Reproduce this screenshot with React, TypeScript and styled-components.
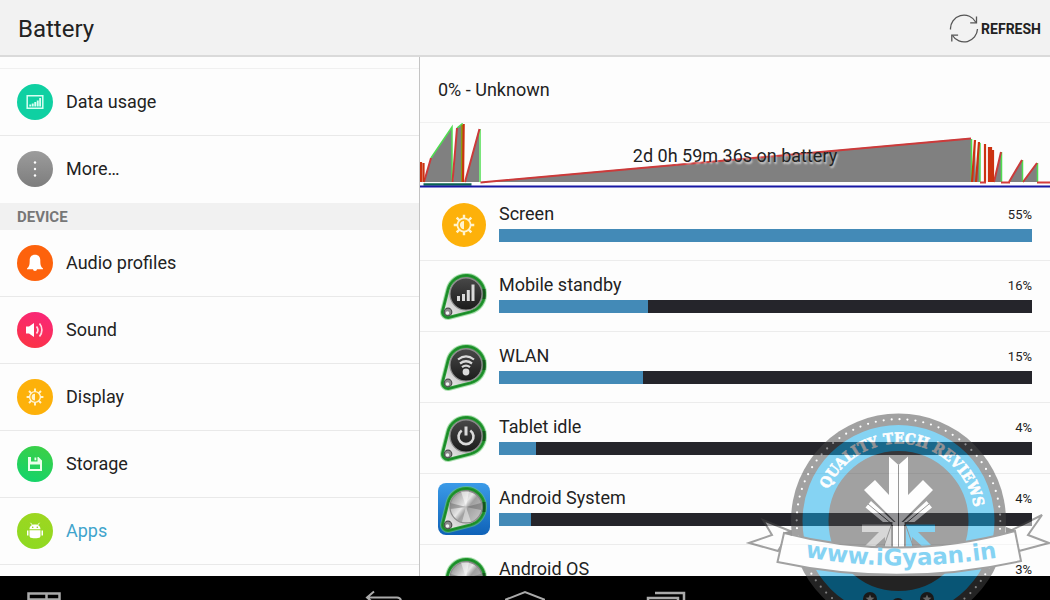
import React from "react";
import styled, { createGlobalStyle } from "styled-components";

const GlobalStyle = createGlobalStyle`
  *, *::before, *::after { box-sizing: border-box; }
  body {
    margin: 0;
    background: #fdfdfd;
    color: #222;
    font-family: Roboto, "Liberation Sans", sans-serif;
  }
  ul { list-style: none; margin: 0; padding: 0; }
`;

const Screen = styled.div`
  position: relative;
  display: flex;
  flex-direction: column;
  height: 100vh;
  overflow: hidden;
`;

const TopBar = styled.header`
  display: flex;
  flex: none;
  align-items: center;
  justify-content: space-between;
  height: 57px;
  padding: 2px 9px 0 18px;
  background: #f2f2f2;
  border-bottom: 2px solid #dadada;
`;

const Title = styled.h1`
  margin: 0;
  font-size: 24px;
  font-weight: 400;
  line-height: 32px;
`;

const RefreshButton = styled.button`
  display: flex;
  align-items: center;
  gap: 2px;
  padding: 0;
  border: 0;
  background: none;
  color: #222;
  font: 700 14px/20px Roboto, "Liberation Sans", sans-serif;
  cursor: pointer;
`;

const Panels = styled.div`
  display: flex;
  flex: 1;
  min-height: 0;
`;

const Sidebar = styled.nav`
  width: 40%;
  overflow: hidden;
  border-right: 1px solid #c4c4c4;
`;

const ScrolledRow = styled.div`
  height: 12px;
  border-bottom: 1px solid #f0f0f0;
`;

const SectionTitle = styled.h2`
  margin: 0;
  padding: 1px 17px 0;
  background: #f1f1f1;
  color: #777;
  font-size: 15px;
  font-weight: 700;
  line-height: 26px;
`;

const MenuItem = styled.li<{ $last?: boolean }>`
  border-bottom: 1px solid ${(p) => (p.$last ? "transparent" : "#e9e9e9")};
`;

const MenuLink = styled.a<{ $active?: boolean }>`
  display: flex;
  align-items: center;
  gap: 13px;
  height: 66px;
  padding: 0 17px;
  color: ${(p) => (p.$active ? "#3fa4cc" : "#222")};
  font-size: 18px;
  line-height: 24px;
  text-decoration: none;
`;

const Badge = styled.span<{ $fill: string; $size: number }>`
  display: grid;
  flex: none;
  place-items: center;
  width: ${(p) => p.$size}px;
  height: ${(p) => p.$size}px;
  border-radius: 50%;
  background: ${(p) => p.$fill};
`;

const Details = styled.main`
  flex: 1;
  min-width: 0;
  overflow: hidden;
`;

const Status = styled.p`
  margin: 0;
  padding: 0 18px;
  border-bottom: 1px solid #f0f0f0;
  font-size: 18px;
  line-height: 65px;
`;

const History = styled.div`
  position: relative;
  height: 67px;
  svg { display: block; width: 100%; height: 67px; }
`;

const HistoryCaption = styled.p`
  position: absolute;
  inset: 21px 0 auto;
  margin: 0;
  font-size: 18px;
  line-height: 24px;
  text-align: center;
  text-shadow: 1px 2px 2px #ffffffb0;
`;

const UsageRow = styled.li`
  display: flex;
  align-items: center;
  gap: 9px;
  height: 71px;
  padding: 0 18px;
  border-bottom: 1px solid #ececec;
`;

const IconSlot = styled.span`
  display: grid;
  flex: none;
  place-items: center;
  width: 52px;
  height: 52px;
`;

const UsageBody = styled.div`
  flex: 1;
  height: 61px;
`;

const UsageHead = styled.div`
  display: flex;
  align-items: center;
  justify-content: space-between;
  height: 34px;
  padding-top: 4px;
  font-size: 18px;
  line-height: 24px;
`;

const Percent = styled.span`
  padding-top: 3px;
  font-size: 13px;
  line-height: 20px;
`;

const Track = styled.div`
  height: 13px;
  background: #25252b;
`;

const Fill = styled.div`
  height: 100%;
  background: #438ab7;
`;

const NavBar = styled.footer`
  display: grid;
  flex: none;
  grid-template-columns: 1fr auto 1fr;
  height: 24px;
  padding-top: 14px;
  overflow: hidden;
  background: #000;
`;

const NavGroup = styled.div`
  display: flex;
  gap: 101px;
  padding-left: 24px;
`;

const NavCenter = styled(NavGroup)`
  padding-left: 0;
`;

const NavButton = styled.button`
  width: 40px;
  height: 30px;
  padding: 0;
  border: 0;
  background: none;
  svg { display: block; }
`;

const Watermark = styled.svg`
  position: absolute;
  right: 0;
  bottom: 0;
  opacity: 0.5;
  pointer-events: none;
`;

function Sun({ size }: { size: number }) {
  return (
    <svg width={size} height={size} viewBox="0 0 24 24" fill="none" stroke="#fff3cf" strokeWidth="1.9">
      <circle cx="12" cy="12" r="7.2" />
      <path d="M12 7.500a4.500 4.500 0 0 0 0 9z" fill="#fff3cf" stroke="none" />
      <path d="M12 5V.8M12 19v4.200M5 12H.8M19 12h4.200M7 7 4 4M17 17l3 3M7 17l-3 3M17 7l3-3" strokeWidth="2.600" />
    </svg>
  );
}

const glyphs: Record<string, React.ReactNode> = {
  data: (
    <svg width="18" height="18" viewBox="0 0 18 18">
      <path d="M1.2 2.7h15.6v12.6H1.2z" fill="none" stroke="#d8fff2" strokeWidth="1.5" />
      <path d="M3.3 13.500v-2h1.900v2zM5.800 13.500v-3h1.900v3zM8.300 13.500V9h1.900v4.500zM10.800 13.500V7.500h1.900v6zM13.200 13.500V5h1.800v8.500z" fill="#d8fff2" />
    </svg>
  ),
  more: (
    <svg width="18" height="18" viewBox="0 0 18 18" fill="#fff">
      <circle cx="9" cy="2.500" r="1.200" />
      <circle cx="9" cy="9" r="1.200" />
      <circle cx="9" cy="15.500" r="1.200" />
    </svg>
  ),
  bell: (
    <svg width="18" height="18" viewBox="0 0 18 18" fill="#fff">
      <path d="M9 .8c3.300 0 5.300 2.200 5.300 5.400 0 4.600.5 6.500 2.700 8.300v.8h-6a2 1.600 0 0 1-4 0H1v-.8c2.200-1.800 2.700-3.700 2.700-8.300C3.700 3 5.700.8 9 .8z" />
    </svg>
  ),
  sound: (
    <svg width="20" height="18" viewBox="0 0 20 18">
      <path d="M1 5.500h3L9 2v14l-5-3.500H1z" fill="#fff" />
      <path d="M11.500 5.500c1.600 2 1.600 5 0 7M14.500 2.500c3.200 3.600 3.200 9.400 0 13" fill="none" stroke="#ffdbe6" strokeWidth="1.700" />
    </svg>
  ),
  sun: <Sun size={18} />,
  disk: (
    <svg width="16" height="16" viewBox="0 0 16 16">
      <path fillRule="evenodd" d="M1 1h10.500L15 4.500V15H1zM4 1v4.500h6.500V1zM3 8.500v4.500h10V8.500z" fill="#eaffea" />
      <path d="M7.500 1.500h1.800v2.800H7.500z" fill="#eaffea" />
    </svg>
  ),
  droid: (
    <svg width="18" height="18" viewBox="0 0 18 18" fill="#fff">
      <path d="M3.500 7.300C3.500 4.500 5.500 2.500 9 2.500s5.500 2 5.500 4.800zM3.500 8.200h11v5.300a2.500 2.500 0 0 1-2.500 2.500 6 2.500 0 0 1-6 0 2.500 2.500 0 0 1-2.500-2.500zM1 8.500h1.500v5H1zM15.500 8.500H17v5h-1.500z" />
      <path d="M4.500 .8l1.800 2.200M13.500 .8l-1.800 2.200" stroke="#fff" strokeWidth=".9" />
      <circle cx="6.700" cy="5.200" r=".8" fill="#8fc71e" />
      <circle cx="11.300" cy="5.200" r=".8" fill="#8fc71e" />
    </svg>
  ),
};

type Entry = { label: string; glyph: string; fill: string; active?: boolean };

const wireless: Entry[] = [
  { label: "Data usage", glyph: "data", fill: "#0fd0a2" },
  { label: "More…", glyph: "more", fill: "linear-gradient(#9c9c9c, #7d7d7d)" },
];

const device: Entry[] = [
  { label: "Audio profiles", glyph: "bell", fill: "#fd620c" },
  { label: "Sound", glyph: "sound", fill: "linear-gradient(20deg, #fb3540, #f9257e)" },
  { label: "Display", glyph: "sun", fill: "#fdb10a" },
  { label: "Storage", glyph: "disk", fill: "linear-gradient(20deg, #0fd46e, #40cf43)" },
  { label: "Apps", glyph: "droid", fill: "linear-gradient(20deg, #8cda22, #9fd620)", active: true },
];

function Menu({ entries, closing }: { entries: Entry[]; closing?: boolean }) {
  return (
    <ul>
      {entries.map((e, i) => (
        <MenuItem key={e.label} $last={closing && i === entries.length - 1}>
          <MenuLink href="#" $active={e.active}>
            <Badge $fill={e.fill} $size={36}>{glyphs[e.glyph]}</Badge>
            {e.label}
          </MenuLink>
        </MenuItem>
      ))}
    </ul>
  );
}

const PIN = "M10.100 19.400A18.500 18.500 0 1 1 32.600 41.900L11.400 47.300A5.500 5.500 0 0 1 4.700 40.600Z";

function Pin({ id, face, tile }: { id: string; face: "bars" | "wifi" | "power" | "metal"; tile?: boolean }) {
  const metal = face === "metal";
  return (
    <svg width="52" height="52" viewBox="0 0 52 52">
      <defs>
        <linearGradient id={`${id}-tile`} x1="0" y1="0" x2="0" y2="1">
          <stop offset="0" stopColor="#3b9be8" />
          <stop offset="1" stopColor="#0f62b8" />
        </linearGradient>
        <linearGradient id={`${id}-disc`} x1="0" y1="0" x2="0" y2="1">
          <stop offset="0" stopColor="#484848" />
          <stop offset="1" stopColor="#1b1b1b" />
        </linearGradient>
        <linearGradient id={`${id}-steel`} x1="0" y1="0" x2="1" y2=".8">
          <stop offset="0" stopColor="#777" />
          <stop offset=".25" stopColor="#b5b5b5" />
          <stop offset=".48" stopColor="#e6e6e6" />
          <stop offset=".6" stopColor="#a0a0a0" />
          <stop offset="1" stopColor="#c4c4c4" />
        </linearGradient>
        <linearGradient id={`${id}-body`} x1="1" y1="0" x2="0" y2="1">
          <stop offset="0" stopColor="#5a5a5a" />
          <stop offset=".5" stopColor="#b4b4b4" />
          <stop offset="1" stopColor="#fafafa" />
        </linearGradient>
      </defs>
      {tile && <rect width="52" height="52" rx="8" fill={`url(#${id}-tile)`} />}
      <path d={PIN} fill="none" stroke="#6fc976" strokeWidth="5" opacity=".55" />
      <path d={PIN} fill={`url(#${id}-body)`} stroke="#259b32" strokeWidth="3" />
      <path d={PIN} fill="none" stroke="#0c6c19" strokeWidth="1" opacity=".5" />
      <path d="M46 19v10" stroke="#123d17" strokeWidth="3" opacity=".7" />
      <circle cx="28" cy="24" r="16" fill={metal ? `url(#${id}-steel)` : `url(#${id}-disc)`} stroke="#8c8c8c" strokeWidth="1.200" />
      {metal && (
        <g>
          <path d="M28 24 23 8.500h8z" fill="#fff" opacity=".5" />
          <path d="M28 24 24 39h9z" fill="#fff" opacity=".45" />
          <path d="M28 24 12.500 20v6zM28 24l15-4v7z" fill="#555" opacity=".4" />
        </g>
      )}
      <circle cx="10" cy="42" r="3.800" fill="#8a8a8a" stroke="#4c4c4c" strokeWidth="1.200" />
      <circle cx="9.500" cy="43" r="1.800" fill="#f2f2f2" />
      {face === "bars" && <path d="M19 31v-5h3v5zM24 31v-7h3v7zM28.800 31V20h3v11zM33.500 31V14.500h3V31z" fill="#dadada" />}
      {face === "wifi" && (
        <g fill="none" stroke="#dadada" strokeWidth="2.200">
          <path d="M20 18.500c5-4 11-4 16 0M22 22.500c4-3 8-3 12 0M24 26.200c2.500-2 5.500-2 8 0" />
          <circle cx="28" cy="31" r="3.400" fill="#dadada" stroke="none" />
        </g>
      )}
      {face === "power" && (
        <g fill="none" stroke="#dadada" strokeWidth="2.600">
          <path d="M23.700 18.500a7.500 7.500 0 1 0 8.600 0" />
          <path d="M28 14.500v9" strokeWidth="3" />
        </g>
      )}
    </svg>
  );
}

const usage = [
  { label: "Screen", percent: "55%", width: 100, icon: <Badge $fill="#fdb10a" $size={44}><Sun size={22} /></Badge> },
  { label: "Mobile standby", percent: "16%", width: 28, icon: <Pin id="mobile" face="bars" /> },
  { label: "WLAN", percent: "15%", width: 27, icon: <Pin id="wlan" face="wifi" /> },
  { label: "Tablet idle", percent: "4%", width: 7, icon: <Pin id="idle" face="power" /> },
  { label: "Android System", percent: "4%", width: 6, icon: <Pin id="system" face="metal" tile /> },
  { label: "Android OS", percent: "3%", width: 5, icon: <Pin id="os" face="metal" /> },
];

function HistoryChart() {
  return (
    <svg viewBox="0 0 630 67" preserveAspectRatio="none" fill="none">
      <path
        d="M4 59 11 35 32 4V59zM33 59 37 5 42 1V59zM45 59 59 6V59zM61 59 551 15V59zM552 59 555 17 556 59 559 19 560 59zM574 59 581 29V59zM589 59 602 37V59zM603 59 617 40V59z"
        fill="#808080"
      />
      <path d="M11 35 32 4V59M37 5 42 1V59M60 6V59M551.500 16V59M560 20V59M581.500 29V59M602.500 37V59M617.500 40V59" stroke="#4fdd50" strokeWidth="1.500" />
      <path d="M4 59 11 35M32.500 59 37 5M45 59 59.500 6M60.500 59.500 551 15.500M574 59 581 29M589 59 602 37M603 59 617 40" stroke="#cc3a3a" strokeWidth="2" />
      <path d="M42 2V59" stroke="#8a9b12" strokeWidth="2" />
      <path d="M1 39V59M3.500 40V59M43.700 1 43 59M552 59 555 17M556 59 559 19M565 21V59M569 24V59M571 24V59M573 27V59" stroke="#cc3210" strokeWidth="2.200" />
      <path d="M560 59.500h6M581 59.500h9M617 59.500h13" stroke="#d43c3c" strokeWidth="1.800" />
      <path d="M3.500 61.500h48" stroke="#0b6553" strokeWidth="2.500" />
      <path d="M0 63.500h630" stroke="#1818a4" strokeWidth="2" />
    </svg>
  );
}

function Star({ x, y }: { x: number; y: number }) {
  return (
    <g transform={`translate(${x} ${y})`}>
      <circle r="7" fill="#333" />
      <path d="M0-4.500 1.300-1.500 4.500-1.300 2 .8 2.800 4 0 2.200-2.800 4-2 .8-4.500-1.300-1.300-1.500z" fill="#c9c9c9" />
    </g>
  );
}

function Seal() {
  return (
    <Watermark width="310" height="200" viewBox="0 0 310 200" role="img" aria-label="iGyaan Quality Tech Reviews">
      <defs>
        <path id="motto" d="M88.500 89.500A76.500 76.500 0 0 1 233 138" />
        <path id="address" d="M65 157Q158 174 262 157" />
      </defs>
      <circle cx="158.500" cy="121" r="107.500" fill="#474747" />
      <circle cx="158.500" cy="121" r="101.800" fill="none" stroke="#fff" strokeWidth="2.200" strokeLinecap="round" strokeDasharray="0 8" />
      <circle cx="158.500" cy="121" r="83" fill="none" stroke="#10aaea" strokeWidth="26" />
      <text fill="#fff" stroke="#fff" strokeWidth=".6" fontFamily="'DejaVu Serif Condensed', 'DejaVu Serif', serif" fontWeight="700" fontSize="15">
        <textPath href="#motto">QUALITY TECH REVIEWS</textPath>
      </text>
      <g fill="#fff">
        <path d="M149 56.500 158.500 65 168 56.500V95L183 80 193 90 158.500 125 124 90 135 80 149 95z" />
        <path d="M131 101 125.500 107.500 143 122H154zM186.500 101 192 107.500 174.500 122H163.500z" />
        <path d="M152.500 122h12v25h-12z" />
      </g>
      <path d="M122 124.500h29V147h-6v-10l-12 11h-10l16-16h-17z" fill="#b3b3b3" />
      <path d="M195 124.500h-29V147h6v-10l12 11h10l-16-16h17z" fill="#10aaea" />
      <path d="M158.500 65v82M152.500 125v22M164.500 125v22M128 104l24 20M189 104l-24 20M144 146l7-20M173 146l-7-20" stroke="#333" strokeWidth="1" fill="none" />
      <g fill="#fff" stroke="#474747" strokeWidth="2">
        <path d="M50 131 23 120l9 15L9 143l29 8zM270 131l32-16-14 20 21 8-30 8z" />
        <path d="M44 133Q159 163 275 131l6 30Q159 188 37.500 162z" />
      </g>
      <path d="M44 132.500 52 130v6zM275 130.500 266 127v6z" fill="#333" />
      <text fill="#10aaea" fontFamily="'DejaVu Sans', sans-serif" fontWeight="700" fontSize="23">
        <textPath href="#address">www.iGyaan.in</textPath>
      </text>
      <Star x={130} y={199} />
      <Star x={158} y={205} />
      <Star x={187} y={199} />
    </Watermark>
  );
}

export default function App() {
  return (
    <Screen>
      <GlobalStyle />
      <TopBar>
        <Title>Battery</Title>
        <RefreshButton type="button">
          <svg width="30" height="30" viewBox="0 0 30 30" fill="none" stroke="#555" strokeWidth="1.300">
            <path d="M1.500 15.500A13.500 13.500 0 0 1 27 8.500M28.500 15A13.500 13.500 0 0 1 3.500 21.500" />
            <path d="M27.500 2.500v6.300h-6.300M2.800 27.500v-6.300h6.300" />
          </svg>
          REFRESH
        </RefreshButton>
      </TopBar>
      <Panels>
        <Sidebar aria-label="Settings">
          <ScrolledRow />
          <Menu entries={wireless} closing />
          <SectionTitle>DEVICE</SectionTitle>
          <Menu entries={device} />
        </Sidebar>
        <Details>
          <Status>0% - Unknown</Status>
          <History>
            <HistoryChart />
            <HistoryCaption>2d 0h 59m 36s on battery</HistoryCaption>
          </History>
          <ul>
            {usage.map((u) => (
              <UsageRow key={u.label}>
                <IconSlot>{u.icon}</IconSlot>
                <UsageBody>
                  <UsageHead>
                    <span>{u.label}</span>
                    <Percent>{u.percent}</Percent>
                  </UsageHead>
                  <Track role="progressbar" aria-label={u.label} aria-valuenow={u.width}>
                    <Fill style={{ width: `${u.width}%` }} />
                  </Track>
                </UsageBody>
              </UsageRow>
            ))}
          </ul>
        </Details>
      </Panels>
      <NavBar>
        <NavGroup>
          <NavButton type="button" aria-label="Split screen">
            <svg width="40" height="30" fill="none" stroke="#aaa" strokeWidth="2.500">
              <path d="M4.500 28V3.500h31V28M22.500 4v24M4 9.500h32" />
            </svg>
          </NavButton>
        </NavGroup>
        <NavCenter>
          <NavButton type="button" aria-label="Back">
            <svg width="40" height="30" fill="none" stroke="#aaa" strokeWidth="2">
              <path d="M10 1.500 3 7.500l7 6M3 7.500h30q4 0 4 4V22H16" />
            </svg>
          </NavButton>
          <NavButton type="button" aria-label="Home">
            <svg width="40" height="30" fill="none" stroke="#aaa" strokeWidth="2">
              <path d="M1 26V9.500L20 2l19 7.500V26z" />
            </svg>
          </NavButton>
          <NavButton type="button" aria-label="Recent apps">
            <svg width="40" height="30" fill="none" stroke="#aaa" strokeWidth="2.500">
              <path d="M9 3h29v18M2 8h30v18H2z" />
            </svg>
          </NavButton>
        </NavCenter>
      </NavBar>
      <Seal />
    </Screen>
  );
}
